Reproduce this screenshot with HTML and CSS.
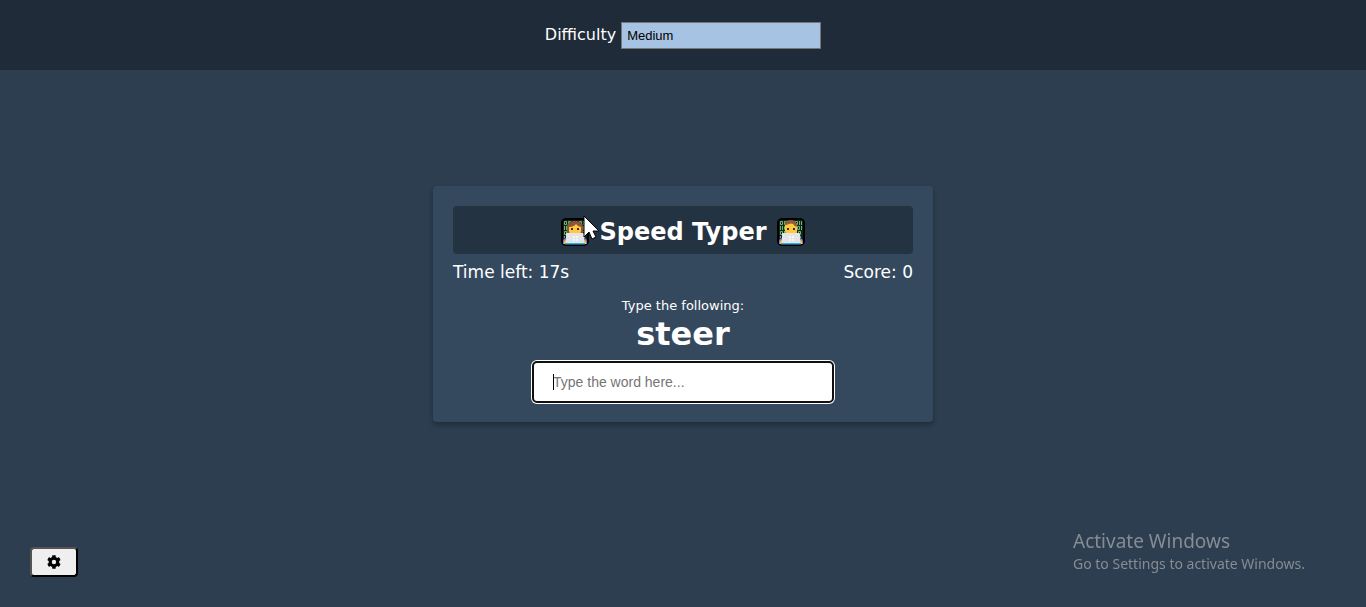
FILE: index.html
```html
<!DOCTYPE html>
<html lang="en">
<head>
<meta charset="utf-8">
<meta name="viewport" content="width=device-width, initial-scale=1">
<title>Speed Typer</title>
<link rel="stylesheet" href="styles.css">
</head>
<body>
<svg class="defs" aria-hidden="true">
  <defs>
    <g id="screen">
      <rect x="1" y="1" width="26" height="26" rx="4" fill="#16241c" stroke="#000" stroke-width="2"/>
      <g fill="none" stroke="#62b978" stroke-width="1">
        <path d="M3.5 3.5h2v3h-2zM7.500 3.500h2v3h-2zM12.500 3v4M15.500 3v4M18.500 3.500h2v3h-2zM22.500 3v4M24.500 3v4"/>
        <path d="M3.500 8v4M5.500 8v4M7.500 8.500h2v3h-2zM18.500 8v4M20.500 8.500h2v3h-2zM24.500 8v4"/>
        <path d="M3.500 13.500h2v3h-2zM7.500 13v4M19.500 13v4M21.500 13.500h2v3h-2z"/>
        <path d="M3.500 18v2M5.500 18v2M20.500 18v2M23.500 18v2"/>
      </g>
    </g>
    <g id="laptop">
      <path d="M2 26v-2q0-4 4-4h16q4 0 4 4v2z" fill="#8e78dc"/>
      <path d="M3 26q0-4 2-4t2 4zM21 26q0-4 2-4t2 4z" fill="#ffc83d"/>
      <path d="M4 25h20v1.500H4z" fill="#28b5e8"/>
      <rect x="5" y="15" width="18" height="10" rx="1" fill="#e4e5e7"/>
      <path d="M12 18h2v2h-2zM15 18h2v2h-2zM12 21h2v2h-2zM15 21h2v2h-2z" fill="#f6f6f6"/>
    </g>
  </defs>
</svg>
<header class="settings">
  <form class="settings-form">
    <label for="difficulty">Difficulty</label>
    <select id="difficulty">
      <option>Easy</option>
      <option selected>Medium</option>
      <option>Hard</option>
    </select>
  </form>
</header>
<main class="stage">
  <section class="card">
    <h1 class="title">
      <svg class="coder" viewBox="0 0 28 28" role="img" aria-label="Woman technologist">
        <use href="#screen"/>
        <path d="M6 16V9q0-6 8-6t8 6v7z" fill="#8c5537"/>
        <path d="M8 9q5 0 7-3 2 3 5 3v4q0 4-6 4t-6-4z" fill="#ffc83d"/>
        <path d="M10 10h2v2h-2zM16 10h2v2h-2z" fill="#402a32"/>
        <use href="#laptop"/>
      </svg>
      <span>Speed Typer</span>
      <svg class="coder" viewBox="0 0 28 28" role="img" aria-label="Man technologist">
        <use href="#screen"/>
        <path d="M8 8q0-5 6-5t6 5v5q0 4-6 4t-6-4z" fill="#ffc83d"/>
        <path d="M8 7q0-5 6-5 6 0 6 7-2 0-4-3-2-1-4 0-2 1-4 1z" fill="#955b3a"/>
        <path d="M10 10h2v2h-2zM16 10h2v2h-2z" fill="#402a32"/>
        <use href="#laptop"/>
      </svg>
      <svg class="pointer" viewBox="0 0 16 26" aria-hidden="true"><path d="M1 1v21l5-5 3 7 4-2-3-6h6z" fill="#fff" stroke="#000"/></svg>
    </h1>
    <div class="stats">
      <span>Time left: 17s</span>
      <span>Score: 0</span>
    </div>
    <label class="prompt" for="word">Type the following:</label>
    <h2 class="target">steer</h2>
    <div class="field">
      <input class="entry" id="word" type="text" placeholder="Type the word here..." autocomplete="off">
      <span class="caret"></span>
    </div>
  </section>
</main>
<button class="gear" type="button" aria-label="Toggle settings">
  <svg viewBox="0 0 512 512" aria-hidden="true"><path d="M487 316l-43-25a193 193 0 0 0 0-70l43-25c5-3 7-9 5-14-11-36-30-69-55-96-4-4-10-5-15-2l-43 24a192 192 0 0 0-61-35V24c0-6-4-11-9-12-37-8-75-8-110 0-6 1-10 6-10 12v49a194 194 0 0 0-61 35L86 84c-5-3-11-2-15 2-25 27-44 60-55 96-2 5 0 11 5 14l43 25a193 193 0 0 0 0 70l-43 25c-5 3-7 9-5 14 11 36 30 69 55 96 4 4 10 5 15 2l42-24a192 192 0 0 0 61 35v49c0 6 4 11 10 12 36 8 74 8 110 0 5-1 9-6 9-12v-49a194 194 0 0 0 61-35l43 24c5 3 11 2 15-2 25-27 44-60 55-96 1-5-1-11-5-14zM254 336a80 80 0 1 1 0-160 80 80 0 0 1 0 160z"/></svg>
</button>
<aside class="notice">
  <p class="notice-title">Activate Windows</p>
  <p class="notice-text">Go to Settings to activate Windows.</p>
</aside>
</body>
</html>
```

FILE: styles.css
```css
* {
  box-sizing: border-box;
}

body {
  margin: 0;
  min-height: 100vh;
  display: flex;
  flex-direction: column;
  background: #2d3e50;
  color: #fff;
  font-family: Verdana, "DejaVu Sans", sans-serif;
  font-size: 16px;
}

.defs {
  position: absolute;
  width: 0;
  height: 0;
}

.settings {
  height: 70px;
  display: flex;
  justify-content: center;
  align-items: center;
  background: #1f2b38;
}

.settings-form {
  display: flex;
  align-items: baseline;
  gap: 5px;
}

.settings-form select {
  width: 200px;
  padding: 5px;
  appearance: none;
  border: 1px solid #767676;
  border-radius: 0;
  background: #a7c3e3;
  color: #000;
  font: 13px/15px "Liberation Sans", Arial, sans-serif;
}

.stage {
  flex: 1;
  display: flex;
  justify-content: center;
  align-items: center;
  padding-bottom: 70px;
}

.card {
  width: 500px;
  max-width: 100%;
  padding: 20px;
  display: flex;
  flex-direction: column;
  align-items: center;
  border-radius: 4px;
  background: #34495e;
  box-shadow: 0 3px 5px rgba(0, 0, 0, 0.3);
}

.title {
  position: relative;
  align-self: stretch;
  height: 48px;
  margin: 0;
  padding-top: 4px;
  display: flex;
  justify-content: center;
  align-items: center;
  gap: 10px;
  border-radius: 4px;
  background: #243342;
  font-size: 24px;
  line-height: 30px;
}

.coder {
  width: 28px;
  height: 28px;
}

.pointer {
  position: absolute;
  top: 9px;
  left: 130px;
  width: 16px;
  height: 26px;
}

.stats {
  align-self: stretch;
  display: flex;
  justify-content: space-between;
  padding-top: 8px;
  font-size: 17px;
  line-height: 20px;
}

.prompt {
  margin-top: 16px;
  font-size: 13px;
  line-height: 16px;
}

.target {
  margin: 0;
  font-size: 32px;
  line-height: 40px;
}

.field {
  position: relative;
  width: 300px;
  margin-top: 8px;
}

.entry {
  display: block;
  width: 100%;
  height: 40px;
  padding: 0 20px;
  border: 0;
  border-radius: 4px;
  outline: 2px solid #101010;
  outline-offset: -1px;
  box-shadow: 0 0 0 2px #fff;
  background: #fff;
  font: 14px/20px "Liberation Sans", Arial, sans-serif;
}

.entry::placeholder {
  color: #757575;
}

.caret {
  position: absolute;
  top: 12px;
  left: 20px;
  width: 1px;
  height: 16px;
  background: #000;
}

.gear {
  position: fixed;
  left: 30px;
  bottom: 30px;
  width: 48px;
  height: 30px;
  display: flex;
  justify-content: center;
  align-items: center;
  border: 2px outset #000;
  border-radius: 4px;
  background: #efefef;
}

.gear svg {
  width: 14px;
  height: 14px;
}

.notice {
  position: fixed;
  left: calc(100% - 293px);
  bottom: 33px;
  color: #858c94;
  font-family: "Segoe UI", "Noto Sans", sans-serif;
  white-space: nowrap;
}

.notice p {
  margin: 0;
}

.notice-title {
  font-size: 19px;
  line-height: 26px;
}

.notice-text {
  font-size: 14px;
  line-height: 20px;
}
```
